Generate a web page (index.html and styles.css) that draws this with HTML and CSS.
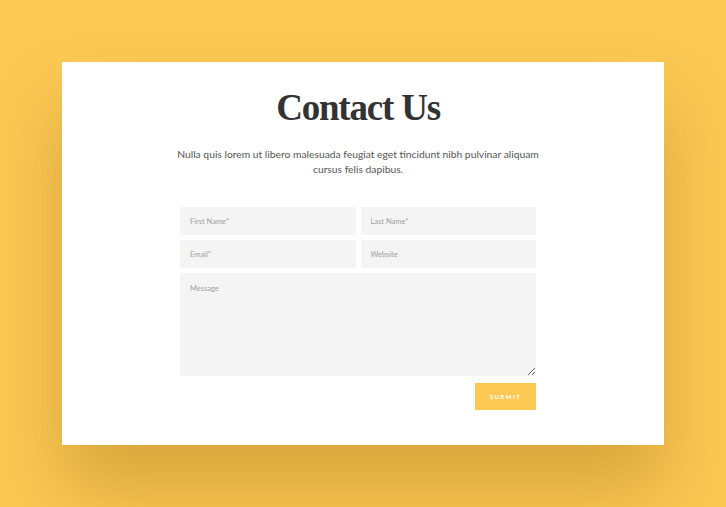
FILE: index.html
```html
<!DOCTYPE html>
<html>
<head>
<meta charset="utf-8">
<link rel="stylesheet" href="styles.css">
</head>
<body>
<div class="card">
  <div class="inner">
    <h1 class="title">Contact Us</h1>
    <p class="lead">Nulla quis lorem ut libero malesuada feugiat eget tincidunt nibh pulvinar aliquam cursus felis dapibus.</p>
    <form class="form">
      <div class="row">
        <input class="field" type="text" placeholder="First Name*">
        <input class="field" type="text" placeholder="Last Name*">
      </div>
      <div class="row">
        <input class="field" type="text" placeholder="Email*">
        <input class="field" type="text" placeholder="Website">
      </div>
      <textarea class="field message" placeholder="Message"></textarea>
      <div class="actions">
        <button class="submit" type="button">SUBMIT</button>
      </div>
    </form>
  </div>
</div>
</body>
</html>
```
FILE: styles.css
```css
html, body {
  margin: 0;
  padding: 0;
  background: #fcc954;
  height: 100%;
  overflow: hidden;
}
body {
  box-sizing: border-box;
  padding-top: 62px;
  font-family: Lato, "Noto Sans", sans-serif;
}
.card {
  margin-left: 62px;
  width: 602px;
  height: 383px;
  background: #fff;
  box-sizing: border-box;
  box-shadow: 0 45px 70px rgba(130, 85, 0, 0.3);
  padding-top: 24px;
}
.inner {
  width: 356px;
  margin-left: 118px;
}
.title {
  margin: 0;
  text-align: center;
  font-family: "Liberation Serif", "DejaVu Serif", serif;
  font-weight: 700;
  font-size: 37px;
  line-height: 44px;
  color: #333;
  letter-spacing: -1.2px;
}
.lead {
  margin: 17px -12px 0 -12px;
  text-align: center;
  font-size: 10.3px;
  line-height: 14.5px;
  color: #555;
}
.form {
  margin-top: 31px;
  display: flex;
  flex-direction: column;
  gap: 5px;
}
.row {
  display: flex;
  gap: 5px;
}
.field {
  flex: 1;
  min-width: 0;
  height: 28px;
  box-sizing: border-box;
  border: none;
  background: #f4f4f4;
  padding: 0 10px;
  font-family: Lato, sans-serif;
  font-size: 7.5px;
  color: #666;
  outline: none;
}
.field::placeholder {
  color: #a0a0a0;
}
.message {
  flex: none;
  height: 103px;
  padding-top: 11px;
  resize: vertical;
  display: block;
}
.actions {
  display: flex;
  justify-content: flex-end;
  margin-top: 2px;
}
.submit {
  width: 61px;
  height: 27px;
  border: none;
  background: #fcc954;
  color: #fff;
  font-family: Lato, sans-serif;
  font-size: 6px;
  font-weight: 700;
  letter-spacing: 1.5px;
  padding: 0;
}
```
